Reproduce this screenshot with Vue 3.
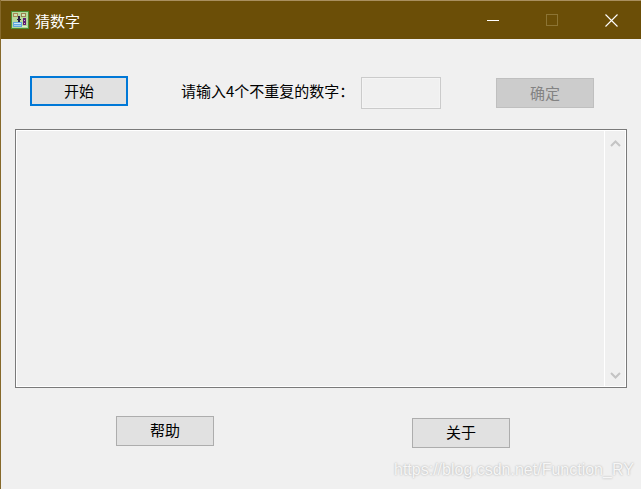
<script setup>
const iconCells = [
  [0, 0, 18, 18, '#4c8f35'],
  [1, 1, 16, 16, '#b6d99c'],
  [2, 2, 5, 4, '#a98a55'],
  [3, 3, 3, 2, '#cfe3b5'],
  [10, 2, 5, 4, '#9a8350'],
  [11, 3, 3, 2, '#d6e6bd'],
  [7, 5, 2, 6, '#2b2145'],
  [6, 8, 4, 1, '#2b2145'],
  [12, 7, 3, 7, '#5d1f70'],
  [13, 9, 1, 1, '#d8a0d8'],
  [13, 12, 1, 1, '#d8a0d8'],
  [2, 11, 9, 5, '#62a8dd'],
  [3, 12, 7, 1, '#d2e7f6'],
  [3, 14, 7, 1, '#a5cdec'],
  [11, 15, 5, 1, '#e0efd0'],
]
</script>

<template>
  <div class="window">
    <header class="titlebar">
      <svg class="app-icon" width="18" height="18" viewBox="0 0 18 18" shape-rendering="crispEdges">
        <rect v-for="(c, i) in iconCells" :key="i" :x="c[0]" :y="c[1]" :width="c[2]" :height="c[3]" :fill="c[4]" />
      </svg>
      <span class="title">猜数字</span>
      <div class="controls">
        <svg class="ctl ctl-min" width="12" height="12" viewBox="0 0 12 12"><path d="M0 6.500h12" stroke="#fff" fill="none" /></svg>
        <svg class="ctl ctl-max" width="12" height="12" viewBox="0 0 12 12"><rect x=".5" y=".5" width="11" height="11" stroke="#8c7434" fill="none" /></svg>
        <svg class="ctl ctl-close" width="13" height="13" viewBox="0 0 13 13"><path d="M.5.5l12 12M12.500.5l-12 12" stroke="#fff" stroke-width="1.1" fill="none" /></svg>
      </div>
    </header>

    <main class="content">
      <div class="top-row">
        <button class="btn btn-start">开始</button>
        <label class="prompt">请输入4个不重复的数字：</label>
        <div class="input"></div>
        <button class="btn btn-ok" disabled>确定</button>
      </div>

      <div class="log">
        <div class="scrollbar">
          <svg width="11" height="7" viewBox="0 0 11 7"><path d="M1 6l4.500-4.500L10 6" stroke="#c4c4c4" stroke-width="2" fill="none" /></svg>
          <svg width="11" height="7" viewBox="0 0 11 7"><path d="M1 1l4.500 4.500L10 1" stroke="#c4c4c4" stroke-width="2" fill="none" /></svg>
        </div>
      </div>

      <div class="bottom-row">
        <button class="btn btn-help">帮助</button>
        <button class="btn btn-about">关于</button>
      </div>
    </main>

    <div class="watermark">https://blog.csdn.net/Function_RY</div>
  </div>
</template>

<style scoped>
.window {
  position: relative;
  box-sizing: border-box;
  width: 641px;
  height: 489px;
  overflow: hidden;
  background: #f0f0f0;
  border-left: 1px solid #86692a;
  font-family: "Noto Sans CJK SC", "Liberation Sans", sans-serif;
  color: #000;
}
.titlebar {
  box-sizing: border-box;
  display: flex;
  align-items: center;
  height: 39px;
  padding-left: 11px;
  background: #6b4e07;
  border-top: 1px solid #a98f5f;
  margin-left: -1px;
}
.app-icon {
  margin-right: 6px;
}
.title {
  color: #fff;
  font-size: 15px;
}
.controls {
  display: flex;
  align-items: center;
  margin-left: auto;
  margin-right: 23px;
}
.ctl-min {
  margin-right: 47px;
  margin-left: -1px;
}
.ctl-max {
  margin-right: 47px;
}
.content {
  padding: 37px 13px 0 14px;
}
.top-row {
  display: flex;
  align-items: flex-start;
  height: 53px;
}
.btn {
  box-sizing: border-box;
  display: block;
  width: 98px;
  height: 30px;
  padding: 0;
  background: #e1e1e1;
  border: 1px solid #adadad;
  border-radius: 0;
  font: inherit;
  font-size: 15px;
  line-height: 26px;
  color: #000;
}
.btn-start {
  margin-left: 15px;
  border: 2px solid #0078d7;
  padding-bottom: 2px;
}
.prompt {
  margin-left: 53px;
  width: 180px;
  font-size: 15px;
  line-height: 29px;
}
.input {
  box-sizing: border-box;
  width: 80px;
  height: 32px;
  margin-top: 1px;
  border: 1px solid #cbcbcb;
  outline: 1px solid #f4f4f4;
  outline-offset: -2px;
}
.btn-ok {
  margin-left: 55px;
  margin-top: 2px;
  background: #cccccc;
  border-color: #bfbfbf;
  color: #838383;
}
.log {
  box-sizing: border-box;
  display: flex;
  justify-content: flex-end;
  width: 612px;
  height: 259px;
  border: 1px solid #7a7a7a;
  box-shadow: inset 0 0 0 1px #fff;
}
.scrollbar {
  box-sizing: border-box;
  display: flex;
  flex-direction: column;
  justify-content: space-between;
  align-items: center;
  width: 21px;
  padding: 9px 0 7px;
  margin: 1px 1px 1px 0;
  border-left: 1px solid #fff;
}
.bottom-row {
  display: flex;
  align-items: flex-start;
  padding-left: 101px;
  margin-top: 28px;
}
.btn-help {
  padding-bottom: 2px;
}
.btn-about {
  margin-left: 198px;
  margin-top: 2px;
  padding-bottom: 2px;
}
.watermark {
  position: absolute;
  left: 393px;
  top: 460px;
  font-family: "Liberation Sans", sans-serif;
  font-size: 16px;
  line-height: 20px;
  white-space: nowrap;
  color: #f6f6f6;
  text-shadow: 0 0 2px #a4a4a4;
}
</style>
